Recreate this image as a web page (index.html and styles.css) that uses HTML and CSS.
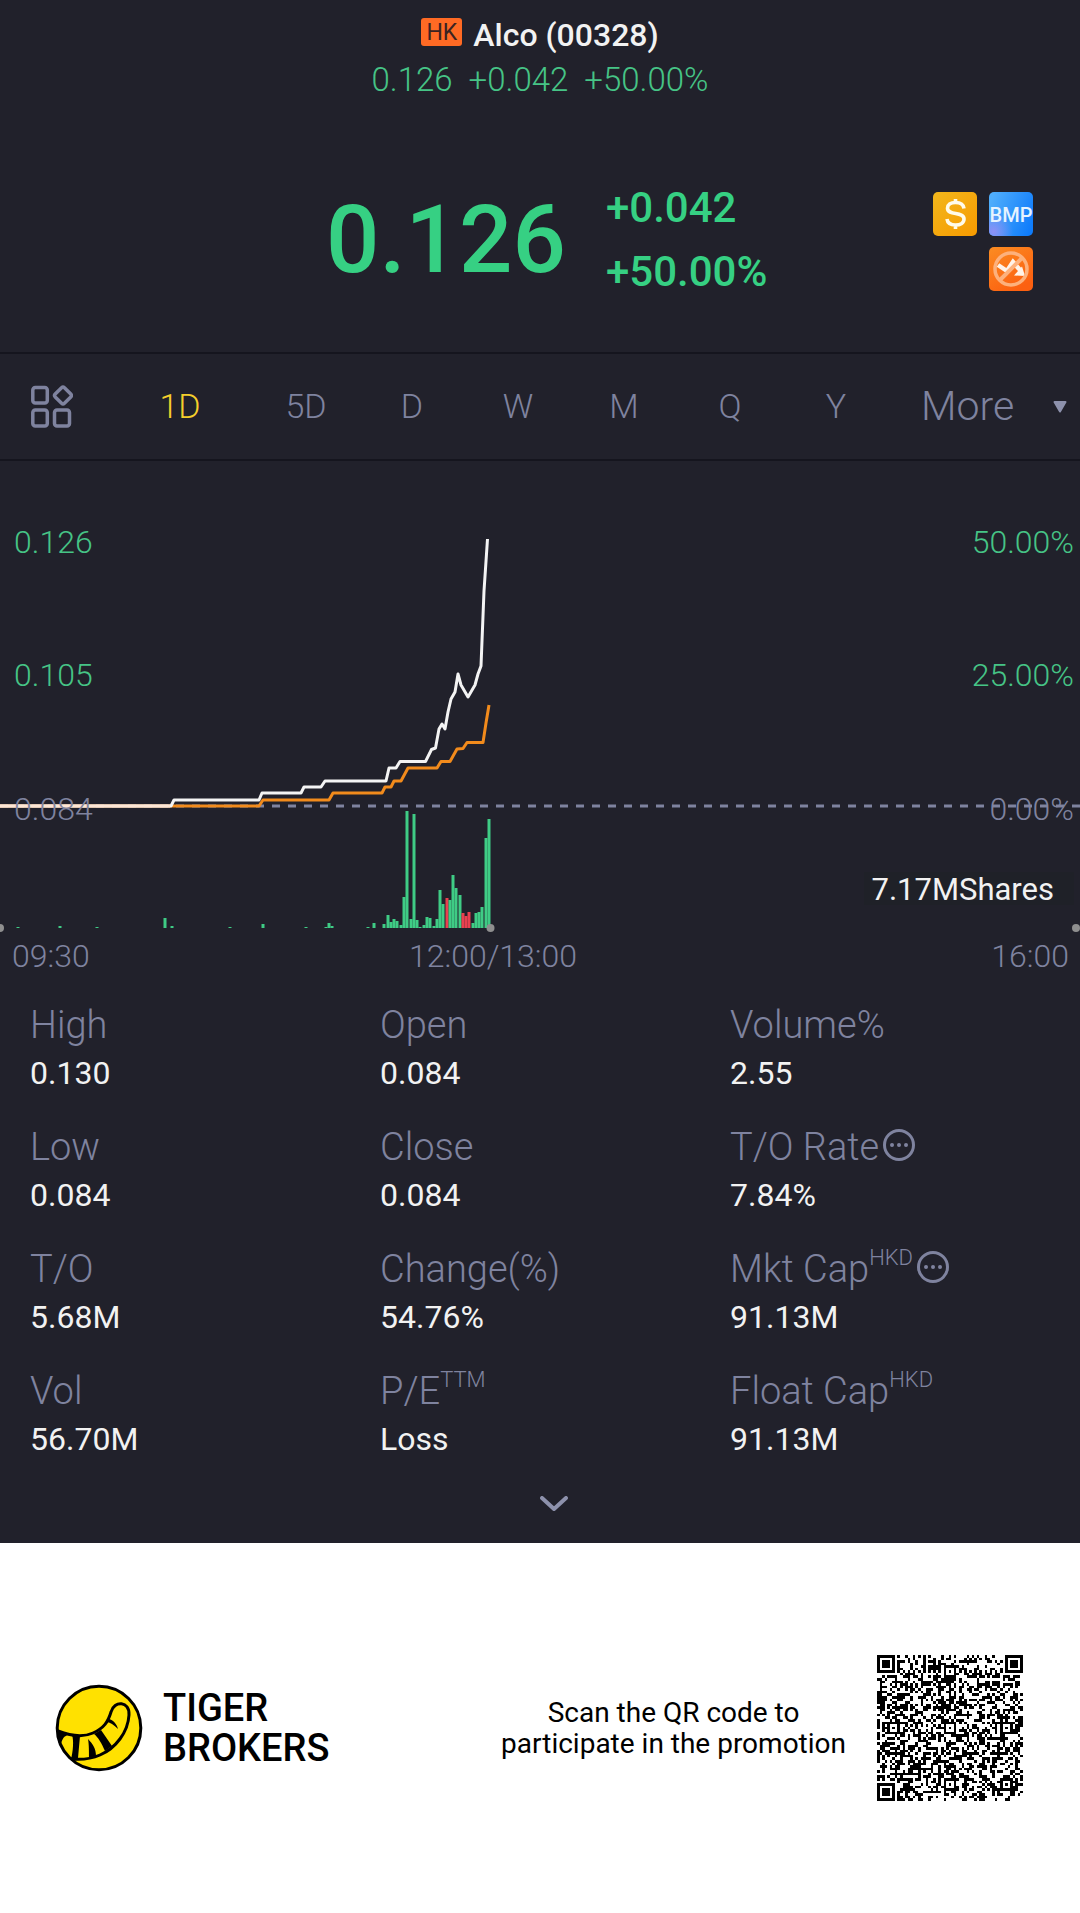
FILE: index.html
```html
<!DOCTYPE html>
<html lang="en">
<head>
<meta charset="utf-8">
<meta name="viewport" content="width=device-width, initial-scale=1">
<title>Alco (00328)</title>
<link rel="stylesheet" href="styles.css">
</head>
<body>
<main class="quote-page">
  <header class="top">
    <h1 class="title"><span class="market">HK</span>Alco (00328)</h1>
    <p class="summary"><span>0.126</span><span>+0.042</span><span>+50.00%</span></p>
  </header>

  <section class="price" aria-label="Price">
    <div class="last">0.126</div>
    <div class="change"><span>+0.042</span><span>+50.00%</span></div>
    <div class="badges">
      <svg class="badge" viewBox="0 0 44 44" role="img" aria-label="Dollar">
        <defs><linearGradient id="gold" x1="0" y1="0" x2="1" y2="1"><stop offset="0" stop-color="#f2b71c"/><stop offset="1" stop-color="#f79a00"/></linearGradient></defs>
        <rect width="44" height="44" rx="5" fill="url(#gold)"/>
        <path d="M31 16.500C30.500 12.500 27 10.500 22.500 10.500C17.500 10.500 14.500 12.800 14.500 16.200C14.500 24 31 19 31 27C31 30.800 27.500 33 22.500 33C17.500 33 14.500 30.800 14 27M22.500 7V11M22.500 33V37" fill="none" stroke="#fffbea" stroke-width="3.600"/>
      </svg>
      <svg class="badge" viewBox="0 0 44 44" role="img" aria-label="BMP">
        <defs><linearGradient id="blue" x1="0" y1="0.300" x2="1" y2="0.700"><stop offset="0" stop-color="#4fadfb"/><stop offset="1" stop-color="#0f7cfb"/></linearGradient><radialGradient id="violet" cx="0.100" cy="0.900" r="0.450"><stop offset="0" stop-color="#8d90f5"/><stop offset="1" stop-color="#8d90f5" stop-opacity="0"/></radialGradient></defs>
        <rect width="44" height="44" rx="5" fill="url(#blue)"/>
        <rect width="44" height="44" rx="5" fill="url(#violet)"/>
        <text x="22" y="30" class="bmp">BMP</text>
      </svg>
      <svg class="badge badge-last" viewBox="0 0 44 44" role="img" aria-label="No short selling">
        <defs><linearGradient id="orange" x1="0" y1="0" x2="0.600" y2="1"><stop offset="0" stop-color="#fb8c22"/><stop offset="1" stop-color="#fc6010"/></linearGradient></defs>
        <rect width="44" height="44" rx="5" fill="url(#orange)"/>
        <path d="M9 18L18 24L24 15L31 23" fill="none" stroke="#fff3e8" stroke-width="4.500"/>
        <path d="M25 28.500L33 19.500L36 29Z" fill="#fff3e8"/>
        <circle cx="22" cy="22" r="16" fill="none" stroke="#fdb17c" stroke-width="3.500"/>
        <path d="M11 33L33 11" stroke="#fdb17c" stroke-width="4"/>
      </svg>
    </div>
  </section>

  <nav class="tabs" aria-label="Chart period">
    <button class="tab grid-button" type="button" aria-label="Chart layout">
      <svg class="grid-icon" viewBox="0 0 42 43" aria-hidden="true"><g fill="none" stroke="#7f839f" stroke-width="3.500"><rect x="1.800" y="2.500" width="14.500" height="15.500" rx="2.500"/><rect x="1.800" y="25" width="14.500" height="16" rx="2.500"/><rect x="23.500" y="25" width="15" height="16" rx="2.500"/><rect x="25.500" y="4" width="13" height="13" rx="2" transform="rotate(45 32 10.500)"/></g></svg>
    </button>
    <button class="tab active" type="button">1D</button>
    <button class="tab" type="button">5D</button>
    <button class="tab" type="button">D</button>
    <button class="tab" type="button">W</button>
    <button class="tab" type="button">M</button>
    <button class="tab" type="button">Q</button>
    <button class="tab" type="button">Y</button>
    <button class="tab more" type="button">More<svg class="caret" viewBox="0 0 14 12" aria-hidden="true"><path d="M1.500 1H12.500L7 10.500Z" fill="#8d91ac" stroke="#8d91ac" stroke-width="2" stroke-linejoin="round"/></svg></button>
  </nav>

  <svg class="chart" viewBox="0 461 1080 514" role="img" aria-label="Intraday price and volume">
    <path d="M0 806H1080" stroke="#7f839f" stroke-width="3" stroke-dasharray="8 8"/>
    <polyline class="line average" points="0,806 259,806 263,800 329,800 333,793 382,793 385,787 391,787 394,781 401,781 408,768 437,768 441,761.500 450,761.500 457,749 463,748.500 467,742.500 483,742.500 486,723 489,705"/>
    <polyline class="line last-price" points="0,806 171,806 174,800 259,800 262,793 301,793 304,787 321,787 325,781 386,781 389,768 396,768 400,761.500 425.500,761.500 431.500,749.500 435.500,748 439,729 442,724 445,729 448,712 451,699 455,692 458,674 461,685 468,697 475,685 478,674 481,666 484,591 487.500,539"/>
    <path d="M0 806H170" stroke="#fde6d6" stroke-width="3"/>
    <g id="volume"></g>
    <g fill="#8f8f8f"><circle cx="0" cy="928" r="4"/><circle cx="490.500" cy="928" r="4"/><circle cx="1076" cy="928" r="4"/></g>
    <g class="axis up"><text x="14" y="553">0.126</text><text x="14" y="686">0.105</text><text x="1074" y="553" class="end">50.00%</text><text x="1074" y="686" class="end">25.00%</text></g>
    <g class="axis flat"><text x="14" y="820">0.084</text><text x="1074" y="820" class="end">0.00%</text><text x="12" y="967">09:30</text><text x="493" y="967" class="mid">12:00/13:00</text><text x="1069" y="967" class="end">16:00</text></g>
    <rect x="864" y="872" width="210" height="33" fill="#1f2128"/>
    <text x="1054" y="900" class="shares end">7.17MShares</text>
  </svg>

  <dl class="stats">
    <div><dt>High</dt><dd>0.130</dd></div>
    <div><dt>Open</dt><dd>0.084</dd></div>
    <div><dt>Volume%</dt><dd>2.55</dd></div>
    <div><dt>Low</dt><dd>0.084</dd></div>
    <div><dt>Close</dt><dd>0.084</dd></div>
    <div><dt>T/O Rate<svg class="info" viewBox="0 0 32 32" aria-hidden="true"><circle cx="16" cy="16" r="14.500"/><path d="M9 16h.01M16 16h.01M23 16h.01"/></svg></dt><dd>7.84%</dd></div>
    <div><dt>T/O</dt><dd>5.68M</dd></div>
    <div><dt>Change(%)</dt><dd>54.76%</dd></div>
    <div><dt>Mkt Cap<span class="unit">HKD</span><svg class="info" viewBox="0 0 32 32" aria-hidden="true"><circle cx="16" cy="16" r="14.500"/><path d="M9 16h.01M16 16h.01M23 16h.01"/></svg></dt><dd>91.13M</dd></div>
    <div><dt>Vol</dt><dd>56.70M</dd></div>
    <div><dt>P/E<span class="unit">TTM</span></dt><dd>Loss</dd></div>
    <div><dt>Float Cap<span class="unit">HKD</span></dt><dd>91.13M</dd></div>
  </dl>
  <button class="expand" type="button" aria-label="Show more"><svg class="chevron" viewBox="0 0 28 16" aria-hidden="true"><path d="M2 2L14 13L26 2" fill="none" stroke="#8d91ac" stroke-width="4" stroke-linecap="round" stroke-linejoin="round"/></svg></button>
</main>

<footer class="promo">
  <div class="brand">
    <svg class="logo" viewBox="0 0 88 88" aria-hidden="true">
      <circle cx="44" cy="44" r="41.800" fill="#ffe100" stroke="#000" stroke-width="3"/>
      <path d="M3 47C16 52 29 53 38 49C49 44 53 38 56 28C59 16 75 17 74 31C73 48 61 64 45 71C36 75 26 76 16 75" fill="none" stroke="#000" stroke-width="3"/>
      <path d="M3 46L13 50L11 52C9 52 7 56 6 60L3 58ZM17 51L25 52L23 74L16 75C18 68 19 56 17 51ZM39 50L46 46L57 62L50 67C47 60 43 53 39 50ZM33 55C38 60 41 65 41 72L34 74C34 68 34 60 33 55ZM51 38L54 35C58 36 62 40 63 45C59 41 55 38 51 38Z"/>
    </svg>
    <strong class="brand-name">TIGER<br>BROKERS</strong>
  </div>
  <p class="scan">Scan the QR code to<br>participate in the promotion</p>
  <svg class="qr" id="qr" viewBox="0 0 57 57" shape-rendering="crispEdges" role="img" aria-label="QR code"></svg>
</footer>
<script src="script.js"></script>
</body>
</html>
```
FILE: styles.css
```css
* { box-sizing: border-box; }

body {
  margin: 0;
  background: #fff;
  font-family: Roboto, "Liberation Sans", sans-serif;
  font-weight: 400;
}

h1, p, dl, dd { margin: 0; }

button {
  padding: 0;
  border: 0;
  background: none;
  color: inherit;
  font: inherit;
}

svg { display: block; }

.quote-page {
  background: #21212b;
  color: #f2f2f2;
}

.top { padding-top: 13px; }

.title {
  display: flex;
  justify-content: center;
  align-items: center;
  gap: 11px;
  font-size: 32px;
  font-weight: 500;
  line-height: 44px;
}

.market {
  width: 41px;
  height: 28px;
  margin-bottom: 6px;
  border-radius: 3px;
  background: #ff6a24;
  color: #3b2322;
  font-size: 23px;
  font-weight: 400;
  line-height: 29px;
  text-align: center;
}

.summary {
  display: flex;
  justify-content: center;
  gap: 16px;
  color: #46c486;
  font-size: 33px;
  font-weight: 300;
  line-height: 46px;
}

.price {
  display: grid;
  grid-template-columns: 326fr 280fr 427fr;
  align-items: center;
  padding: 73px 47px 48px 0;
  color: #36d083;
}

.last {
  grid-column: 2;
  font-size: 94px;
  font-weight: 500;
  line-height: 96px;
}

.change {
  grid-column: 3;
  grid-row: 1;
  display: flex;
  flex-direction: column;
  font-size: 42px;
  font-weight: 500;
  line-height: 64px;
}

.badges {
  grid-column: 3;
  grid-row: 1;
  justify-self: end;
  display: grid;
  grid-template-columns: 44px 44px;
  gap: 11px 12px;
  padding-top: 2px;
}

.badge { width: 44px; height: 44px; }
.badge-last { grid-column: 2; }

.bmp {
  fill: #e6f3ff;
  font-size: 20px;
  font-weight: 500;
  text-anchor: middle;
}

.tabs {
  display: grid;
  grid-template-columns: 107fr 146fr repeat(6, 106fr) 191fr;
  align-items: center;
  border-top: 2px solid #15151e;
  border-bottom: 2px solid #15151e;
  color: #7f839f;
  font-size: 34px;
  font-weight: 300;
  line-height: 105px;
}

.active { color: #f5cf2c; }
.grid-button { padding-left: 31px; }
.grid-icon { width: 42px; height: 43px; }

.more {
  display: flex;
  align-items: center;
  justify-content: space-between;
  padding: 0 13px 0 32px;
  font-size: 41px;
}

.caret { width: 14px; height: 12px; }

.chart { width: 100%; height: auto; }

.line { fill: none; stroke-width: 3; stroke-linejoin: round; }
.average { stroke: #f28b1c; }
.last-price { stroke: #f4f4f4; }

.axis { font-size: 32px; font-weight: 300; }
.up { fill: #46c486; }
.flat { fill: #7f839f; }
.shares { fill: #f2f2f2; font-size: 31px; }
.end { text-anchor: end; }
.mid { text-anchor: middle; }
.rise { fill: #3fcc85; }
.fall { fill: #e8404f; }

.stats {
  display: grid;
  grid-template-columns: repeat(3, 1fr);
  row-gap: 26px;
  padding: 25px 0 0 30px;
}

.stats dt {
  display: flex;
  align-items: center;
  height: 50px;
  color: #7f839f;
  font-size: 38px;
  font-weight: 300;
  line-height: 50px;
}

.stats dd {
  font-size: 32px;
  line-height: 46px;
}

.unit {
  align-self: flex-start;
  font-size: 22px;
  line-height: 28px;
}

.info {
  width: 32px;
  height: 32px;
  margin: 0 0 4px 4px;
  fill: none;
  stroke: #7f839f;
  stroke-width: 3;
  stroke-linecap: round;
}

.info path { stroke-width: 4; }

.expand {
  display: flex;
  justify-content: center;
  width: 100%;
  padding: 34px 0 31px 27px;
}

.chevron { width: 28px; height: 16px; }

.promo {
  display: flex;
  align-items: center;
  justify-content: space-between;
  padding: 112px 57px 112px 55px;
  color: #000;
}

.brand {
  display: flex;
  align-items: center;
  gap: 20px;
}

.logo { width: 88px; height: 88px; }

.brand-name {
  font-size: 38px;
  font-weight: 500;
  line-height: 40px;
}

.scan {
  margin-left: auto;
  font-size: 28px;
  font-weight: 400;
  line-height: 31px;
  text-align: center;
}

.qr {
  width: 146px;
  height: 146px;
  margin-left: 31px;
}
```
FILE: script.js
```js
const NS = "http://www.w3.org/2000/svg";

// Volume bars: [x centre, height, falling]
const bars = [
  [18, 1], [60, 2], [97, 1], [165, 10], [172, 2], [230, 1], [263, 4], [306, 1],
  [326, 1], [329, 5], [332, 2], [368, 1], [374, 5], [384, 4], [388, 13],
  [391, 6], [394, 9], [397, 7], [401, 3], [404, 31], [407, 117], [411, 9],
  [414, 114], [417, 8], [420, 1], [424, 3], [427, 11], [430, 10], [434, 2],
  [437, 9], [440, 38], [443, 24], [447, 30, 1], [450, 28], [453, 53], [456, 40],
  [460, 33], [463, 15, 1], [466, 12, 1], [469, 16, 1], [473, 5], [476, 15],
  [479, 16], [482, 21], [486, 90], [489, 109]
];
const volume = document.getElementById("volume");
for (const [x, h, falling] of bars) {
  const r = document.createElementNS(NS, "rect");
  r.setAttribute("x", x - 1.5);
  r.setAttribute("y", 928 - h);
  r.setAttribute("width", 3);
  r.setAttribute("height", h);
  r.setAttribute("class", falling ? "fall" : "rise");
  volume.appendChild(r);
}

// QR symbol, 57 modules a side: finders, alignment marks, timing and data
const N = 57;
const ring = (dx, dy, rings) => rings.includes(Math.max(Math.abs(dx), Math.abs(dy)));
const align = [[28, 6], [6, 28], [28, 28], [50, 28], [28, 50], [50, 50]];
let seed = 328;
function bit() {
  seed = (Math.imul(seed, 1664525) + 1013904223) >>> 0;
  return (seed >>> 24) % 2 === 1;
}
function dark(x, y) {
  const data = bit();
  for (const [cx, cy] of [[3, 3], [N - 4, 3], [3, N - 4]]) {
    if (Math.abs(x - cx) <= 4 && Math.abs(y - cy) <= 4) return ring(x - cx, y - cy, [0, 1, 3]);
  }
  for (const [cx, cy] of align) {
    if (Math.abs(x - cx) <= 2 && Math.abs(y - cy) <= 2) return ring(x - cx, y - cy, [0, 2]);
  }
  if (x === 6 || y === 6) return (x + y) % 2 === 0;
  return data;
}
let d = "";
for (let y = 0; y < N; y++) {
  for (let x = 0; x < N; x++) {
    if (dark(x, y)) d += `M${x} ${y}h1v1h-1z`;
  }
}
const modules = document.createElementNS(NS, "path");
modules.setAttribute("d", d);
document.getElementById("qr").appendChild(modules);
```
